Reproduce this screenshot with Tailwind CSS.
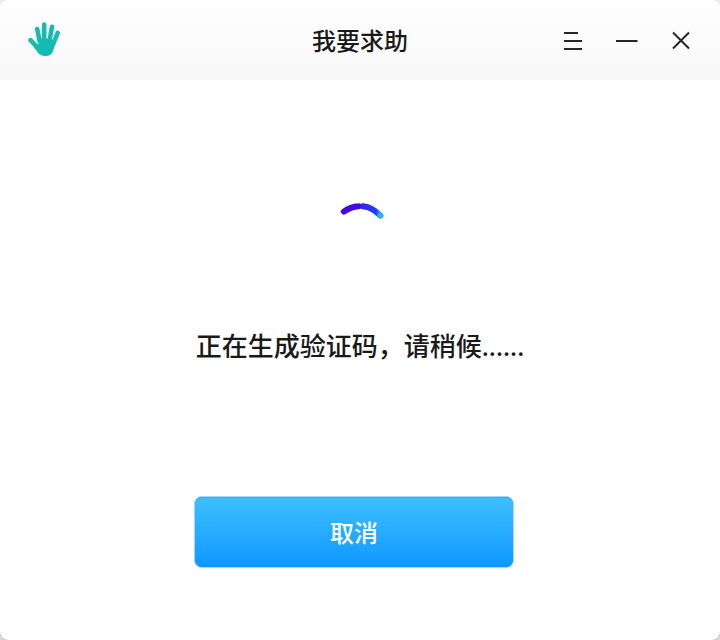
<!DOCTYPE html>
<html lang="zh-CN">
<head>
<meta charset="utf-8">
<title>我要求助</title>
<script src="https://cdn.jsdelivr.net/npm/@tailwindcss/browser@4"></script>
</head>
<body class="font-['Noto_Sans_CJK_SC',sans-serif] font-medium text-[#1a1a1a]">
<div class="bg-linear-to-b from-[#f0f0f0] to-[#d4d4d4]">
<div class="w-[720px] h-[640px] rounded-[9px] overflow-hidden bg-white flex flex-col">
  <header class="h-20 shrink-0 grid grid-cols-[1fr_auto_1fr] items-center bg-linear-to-b from-[#fefefe] to-[#f8f8f8]">
    <svg class="ml-7 mb-0.5 w-8 h-9" viewBox="28 21 32 36" fill="none" stroke="#15bbb0" stroke-linecap="round" stroke-linejoin="round">
      <path stroke-width="4.5" d="M37.2 29L39.6 41M44.2 24.4V40M52 26.8L49.4 41M57.7 32.8L53 44.5"/>
      <path stroke-width="4.6" d="M30.5 40.2L37 47"/>
      <path fill="#15bbb0" stroke="none" d="M37.3 38.5L51.5 38.5L55.3 43.8L53.3 50.5Q51.2 56.2 45.5 56.2Q41.5 56.2 38.8 53.8L33.6 47L36.5 44L38.6 44.4Z"/>
    </svg>
    <h1 class="text-[24px] leading-9">我要求助</h1>
    <div class="flex justify-end gap-[33px] pr-[29px] pt-0.5">
      <svg class="w-[19px] h-5" viewBox="0 0 19 20" stroke="#262626" stroke-width="2"><path d="M0 2H14M0 10H18M0 18H18"/></svg>
      <svg class="w-[22px] h-5" viewBox="0 0 22 20" stroke="#262626" stroke-width="2"><path d="M0 10H21.5"/></svg>
      <svg class="w-5 h-5" viewBox="0 0 20 20" stroke="#262626" stroke-width="2"><path d="M2 1.5L18 17.5M18 1.5L2 17.5"/></svg>
    </div>
  </header>
  <main class="flex-1 flex flex-col items-center">
    <svg class="mt-[120px] w-12 h-5 ml-1" viewBox="338 200 48 20" fill="none" stroke-width="6" stroke-linecap="round">
      <defs>
        <linearGradient id="tail" x1="361" x2="381" y1="0" y2="0" gradientUnits="userSpaceOnUse"><stop stop-color="#3221e8"/><stop offset=".75" stop-color="#1c3ef8"/><stop offset="1" stop-color="#30a8ff"/></linearGradient>
      </defs>
      <path stroke="#4309e0" d="M343.8 211.6Q350.5 206.7 358.5 206.2"/>
      <path stroke="url(#tail)" d="M363 206.2Q372.5 207.2 380.3 215.5"/>
      <circle cx="380.3" cy="215.6" r="3" fill="#35adff"/>
    </svg>
    <p class="mt-[105px] h-10 text-[26px] leading-10 whitespace-nowrap">正在生成验证码，请稍候<span class="font-['Noto_Sans'] font-medium">......</span></p>
    <button class="mt-[131px] -ml-3 w-80 h-[72px] rounded-lg border border-[#a5d8fb] bg-[#0a98ff] p-0">
      <span class="flex items-center justify-center size-full rounded-[7px] border-t border-[#41a8f0] bg-linear-to-b from-[#3dbfff] to-[#0a98ff] pb-0.5 text-[24px] leading-9 text-white">取消</span>
    </button>
  </main>
</div>
</div>
</body>
</html>
